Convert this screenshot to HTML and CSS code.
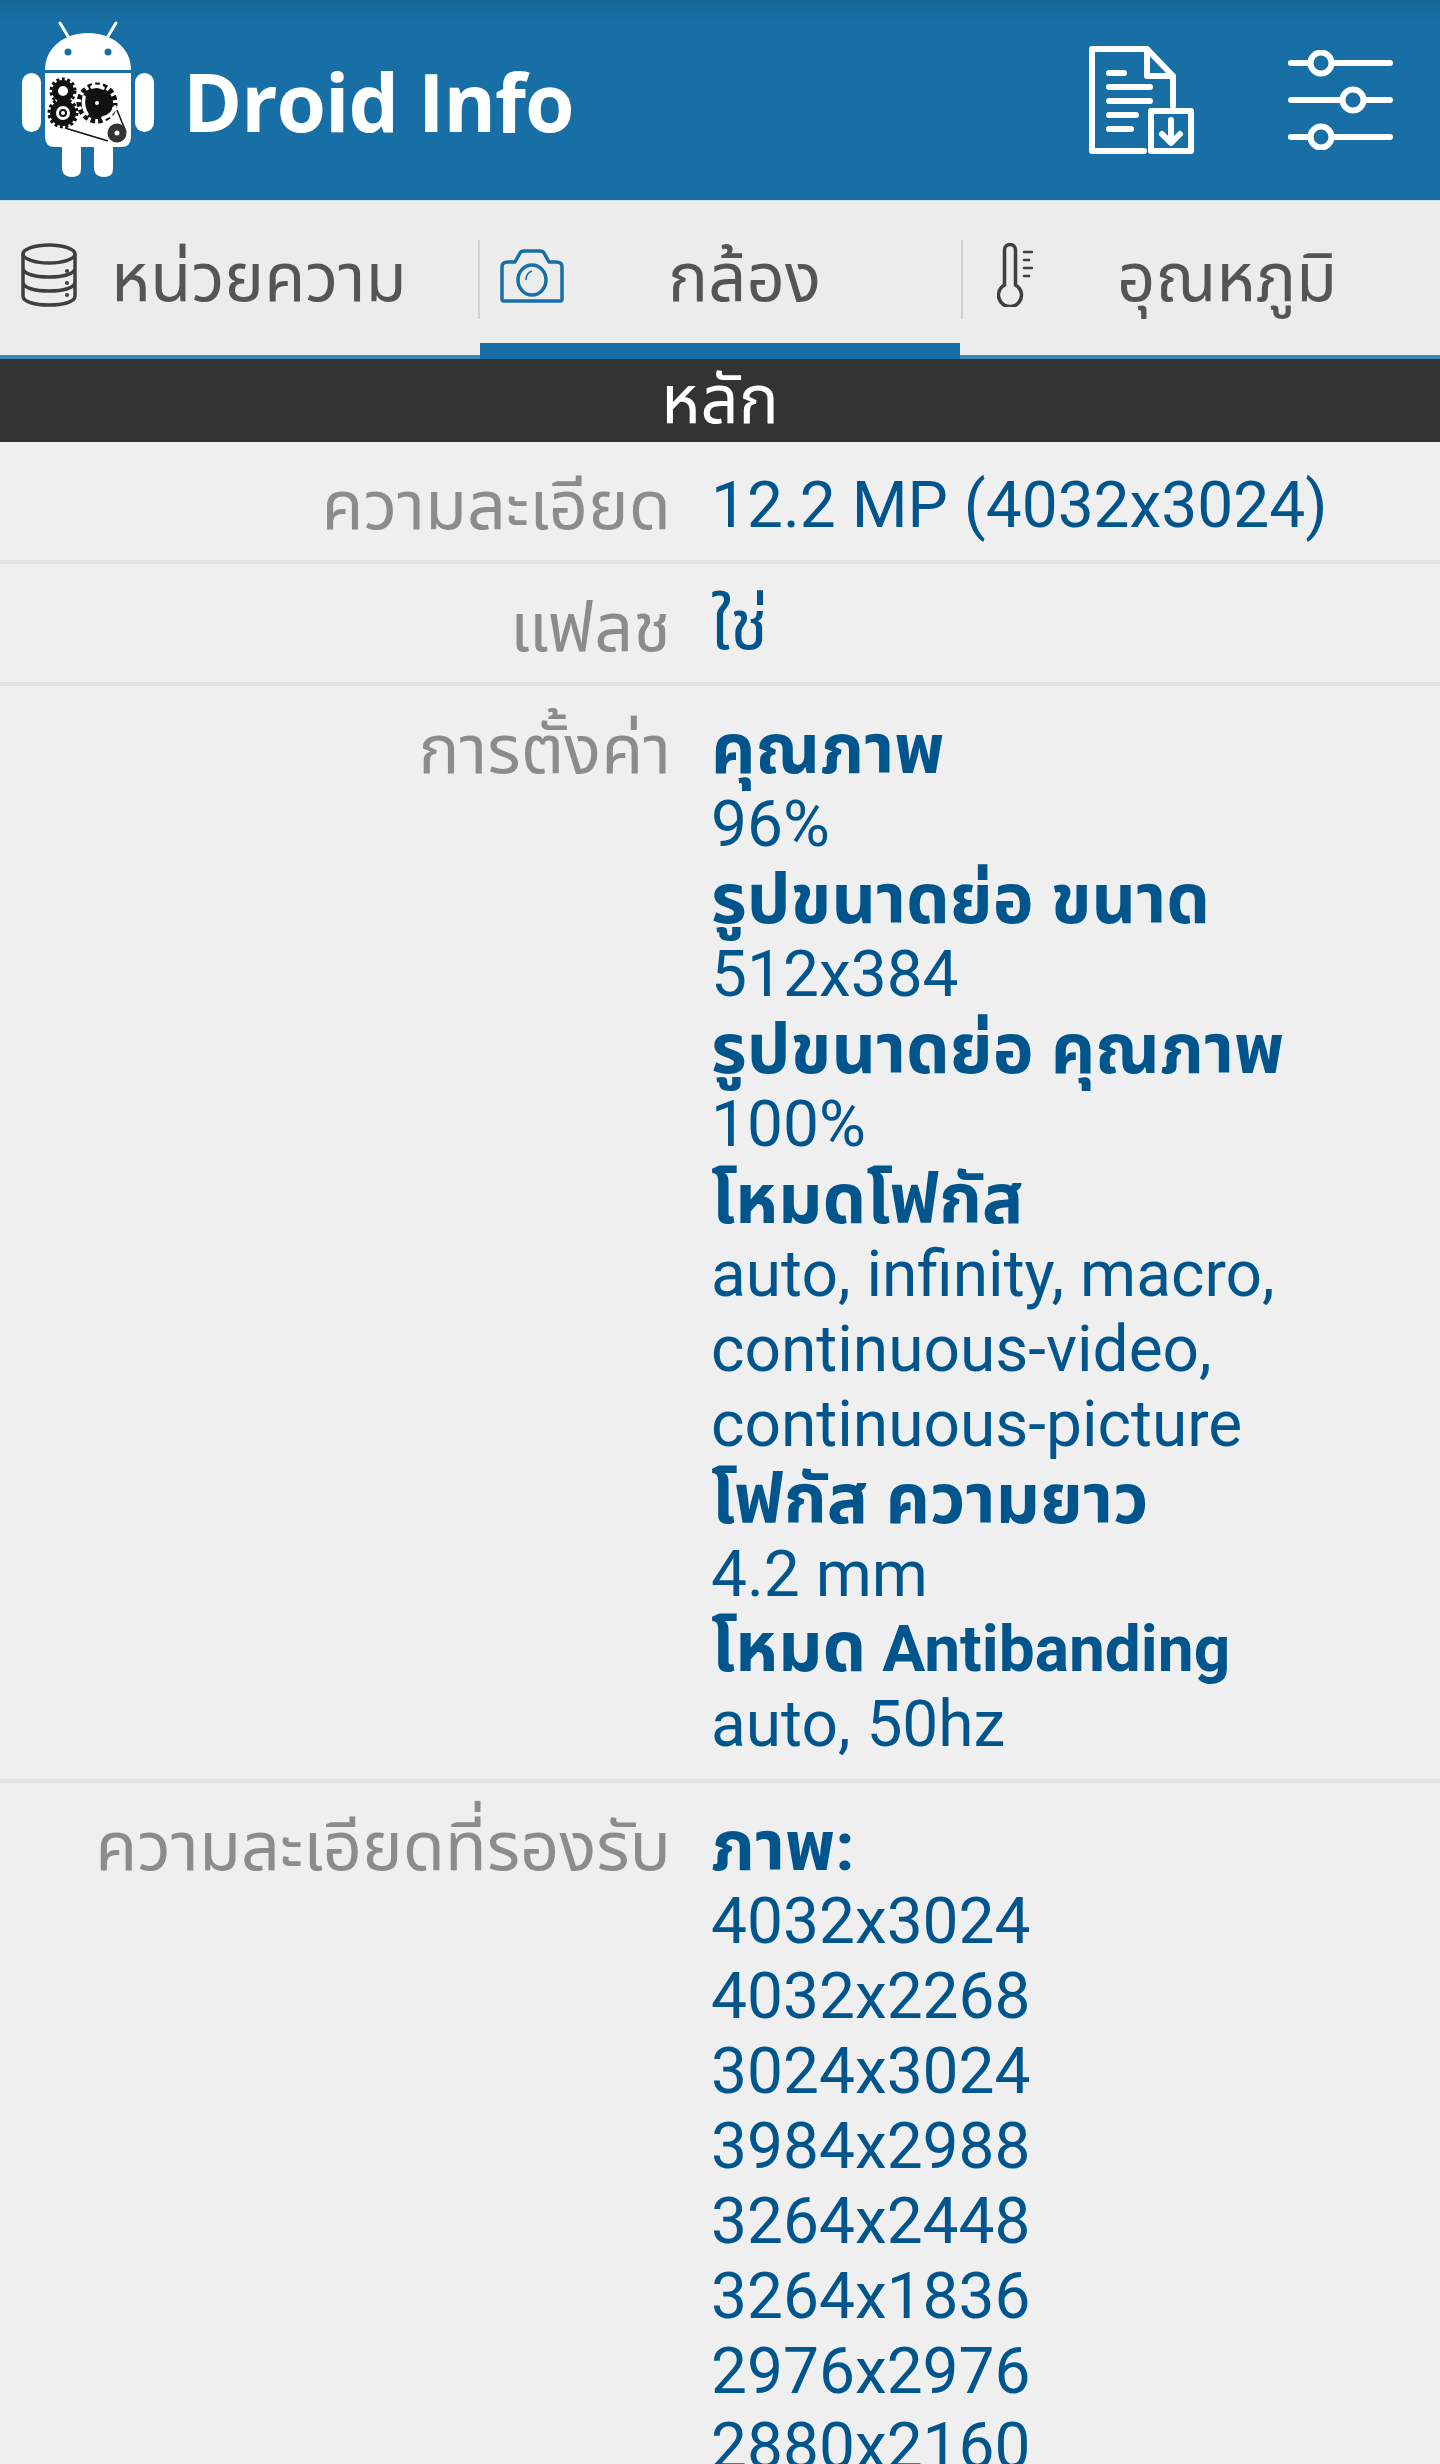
FILE: index.html
```html
<!DOCTYPE html>
<html lang="th">
<head>
  <meta charset="UTF-8" />
  <meta name="viewport" content="width=device-width, initial-scale=1" />
  <title>Droid Info</title>
  <link rel="stylesheet" href="styles.css">
</head>
<body>
  <header class="app-bar">
    <svg class="logo" viewBox="20 20 140 160" aria-hidden="true">
      <path d="M60 23 69 38M116 23 107 38" stroke="#fff" stroke-width="3" stroke-linecap="round" fill="none"/>
      <path d="M45 70C45 47 65 33 88 33s43 14 43 37z" fill="#fff"/>
      <circle cx="68" cy="52" r="3.500" fill="#176fa6"/><circle cx="108" cy="52" r="3.500" fill="#176fa6"/>
      <path d="M45 73h86v64q0 10-10 10H55q-10 0-10-10z" fill="#fff"/>
      <rect x="22" y="73" width="19" height="59" rx="9.500" fill="#fff"/><rect x="135" y="73" width="19" height="59" rx="9.500" fill="#fff"/>
      <path d="M62 145h19v24q0 8-9 8t-10-8zM94 145h19v24q0 8-9 8t-10-8z" fill="#fff"/>
      <g fill="none" stroke="#111">
        <circle cx="63" cy="91" r="8" stroke-width="6"/><circle cx="63" cy="91" r="12" stroke-width="3" stroke-dasharray="3 2.500"/>
        <circle cx="97" cy="103" r="9" stroke-width="14"/><circle cx="97" cy="103" r="18" stroke-width="5" stroke-dasharray="4.500 3"/>
        <path d="M84 97q-2 10 3 17M103 118q9-2 12-11M92 87q6-2 11 1" stroke="#fff" stroke-width="3.500" stroke-linecap="round"/>
        <circle cx="63" cy="113" r="10" stroke-width="6"/><circle cx="63" cy="113" r="14" stroke-width="3" stroke-dasharray="3 2.500"/>
        <circle cx="63" cy="113" r="3" stroke-width="2"/>
        <path d="M65 128 108 141M117 110 126 132" stroke-width="1.500"/>
        <circle cx="117" cy="133" r="6" stroke="#333" stroke-width="7"/>
      </g>
    </svg>
    <h1 class="app-title">Droid Info</h1>
    <svg class="doc-icon" viewBox="0 0 105 108" fill="none" stroke="#fff" stroke-width="6" stroke-linecap="round" stroke-linejoin="round" aria-hidden="true">
      <path d="M55 105H3V3h55l26 27v30M58 3v27h26"/>
      <path d="M20 27h15M20 41h41M20 55h41M20 69h27M20 83h22"/>
      <path d="M62 65h40v40H62zM82 74v22M73 88l9 9 9-9"/>
    </svg>
    <svg class="slider-icon" viewBox="0 0 106 100" fill="none" stroke="#fff" stroke-width="6" stroke-linecap="round" aria-hidden="true">
      <path d="M4 13h17M47 13h56M4 50h49M79 50h24M4 87h17M47 87h56"/>
      <circle cx="34" cy="13" r="10.500"/><circle cx="66" cy="50" r="10.500"/><circle cx="34" cy="87" r="10.500"/>
    </svg>
  </header>

  <nav class="tabs">
    <div class="tab tab-storage">
      <svg class="tab-icon" viewBox="0 0 56 64" fill="none" stroke="#3f3f3f" stroke-width="3.500" aria-hidden="true">
        <ellipse cx="28" cy="11" rx="26" ry="9"/>
        <path d="M2 11v42c0 6 12 9 26 9s26-3 26-9V11M2 25c0 6 12 9 26 9s26-3 26-9M2 39c0 6 12 9 26 9s26-3 26-9"/>
        <circle cx="46" cy="28" r="2" fill="#3f3f3f" stroke="none"/><circle cx="46" cy="40" r="2" fill="#3f3f3f" stroke="none"/><circle cx="46" cy="52" r="2" fill="#3f3f3f" stroke="none"/>
      </svg>
      <span class="tab-label">หน่วยความ</span>
    </div>
    <div class="tab tab-camera active">
      <svg class="tab-icon" viewBox="0 0 64 54" fill="none" stroke="#176fa6" stroke-width="3.500" stroke-linejoin="round" aria-hidden="true">
        <path d="M2 18q0-5 6-5h7l5-9q1-2 4-2h16q3 0 4 2l5 9h7q6 0 6 5v32q0 2-2 2H4q-2 0-2-2z"/>
        <ellipse cx="32" cy="31" rx="14" ry="15"/>
        <path d="M26 31q0-7 6-9" stroke-width="1.500"/>
      </svg>
      <span class="tab-label">กล้อง</span>
    </div>
    <div class="tab tab-temp">
      <svg class="tab-icon" viewBox="0 0 36 64" fill="none" stroke="#3f3f3f" stroke-width="3.500" stroke-linecap="round" aria-hidden="true">
        <path d="M7.500 42V7a5.500 5.500 0 0 1 11 0v35a11.500 11.500 0 1 1-11 0z"/>
        <path d="M27 9h8M27 17h5M27 25h8M27 33h5" stroke-width="2.500"/>
      </svg>
      <span class="tab-label">อุณหภูมิ</span>
    </div>
  </nav>

  <div class="section-title">หลัก</div>

  <main class="info-list">
    <div class="info-row">
      <div class="info-label">ความละเอียด</div>
      <div class="info-value">12.2 MP (4032x3024)</div>
    </div>
    <div class="info-row">
      <div class="info-label">แฟลช</div>
      <div class="info-value"><span class="th">ใช่</span></div>
    </div>
    <div class="info-row">
      <div class="info-label">การตั้งค่า</div>
      <div class="info-value">
        <b class="th">คุณภาพ</b>
        <div>96%</div>
        <b class="th">รูปขนาดย่อ ขนาด</b>
        <div>512x384</div>
        <b class="th">รูปขนาดย่อ คุณภาพ</b>
        <div>100%</div>
        <b class="th">โหมดโฟกัส</b>
        <div>auto, infinity, macro,</div>
        <div>continuous-video,</div>
        <div>continuous-picture</div>
        <b class="th">โฟกัส ความยาว</b>
        <div>4.2 mm</div>
        <b><span class="th">โหมด</span> Antibanding</b>
        <div>auto, 50hz</div>
      </div>
    </div>
    <div class="info-row">
      <div class="info-label">ความละเอียดที่รองรับ</div>
      <div class="info-value">
        <b class="th">ภาพ:</b>
        <div>4032x3024</div>
        <div>4032x2268</div>
        <div>3024x3024</div>
        <div>3984x2988</div>
        <div>3264x2448</div>
        <div>3264x1836</div>
        <div>2976x2976</div>
        <div>2880x2160</div>
      </div>
    </div>
  </main>
</body>
</html>
```

FILE: styles.css
```css
html, body {
  margin: 0;
  height: 2464px;
  overflow: hidden;
}

body {
  background-color: #efefef;
  font-family: Roboto, "Noto Sans", "Noto Sans Thai", "DejaVu Sans", sans-serif;
}

.app-bar {
  display: flex;
  align-items: center;
  height: 200px;
  background: linear-gradient(#176496 0, #176fa6 24px);
}

.logo {
  width: 140px;
  height: 160px;
  margin-left: 20px;
}

.app-title {
  flex: 1;
  margin: 0 0 0 23px;
  color: white;
  font-family: "Open Sans", sans-serif;
  font-size: 80px;
  font-weight: 700;
  letter-spacing: -1px;
}

.doc-icon {
  width: 105px;
  height: 108px;
  margin-right: 93px;
}

.slider-icon {
  width: 106px;
  height: 100px;
  margin-right: 47px;
}

.tabs {
  display: flex;
  height: 159px;
  box-sizing: border-box;
  background-color: #ececec;
  border-top: 1px solid #cfe6f3;
  border-bottom: 4px solid #3f87b8;
}

.tab {
  display: flex;
  align-items: flex-start;
  box-sizing: border-box;
  padding-top: 39px;
  position: relative;
}

.tab-storage { width: 480px; padding-left: 21px; }
.tab-camera { width: 480px; padding-left: 20px; }
.tab-temp { flex: 1; padding-left: 37px; }

.tab-camera::before,
.tab-temp::before {
  content: "";
  position: absolute;
  top: 39px;
  width: 2px;
  height: 79px;
  background-color: #d2d2d2;
}

.tab-camera::before { left: -2px; }
.tab-temp::before { left: 1px; }

.tab.active::after {
  content: "";
  position: absolute;
  left: 0;
  right: 0;
  bottom: -4px;
  height: 16px;
  background-color: #176fa6;
}

.tab-storage .tab-icon { width: 56px; height: 64px; margin-top: 3px; }
.tab-camera .tab-icon { width: 64px; height: 54px; margin-top: 9px; }
.tab-temp .tab-icon { width: 36px; height: 64px; margin-top: 3px; }

.tab-label {
  color: #555;
  font-size: 67px;
  line-height: 76px;
}

.tab-storage .tab-label { margin-left: 34px; }
.tab-camera .tab-label { margin-left: 104px; }
.tab-temp .tab-label { margin-left: 84px; }

.section-title {
  height: 83px;
  background-color: #333;
  color: white;
  font-size: 67px;
  line-height: 83px;
  text-align: center;
}

.info-row {
  display: grid;
  grid-template-columns: 671px 1fr;
  gap: 40px;
  padding: 26px 0 17px;
  border-bottom: 4px solid #e2e2e2;
  font-size: 64px;
  line-height: 75px;
}

.info-row:last-child {
  border-bottom: none;
}

.info-label {
  color: #8c8c8c;
  font-size: 68.500px;
  text-align: right;
}

.info-value {
  color: #00568c;
}

.info-value b {
  display: block;
  height: 75px;
  font-weight: 700;
}

.th {
  font-size: 69px;
  line-height: 1;
}

.info-value b.th {
  line-height: 75px;
}
```
